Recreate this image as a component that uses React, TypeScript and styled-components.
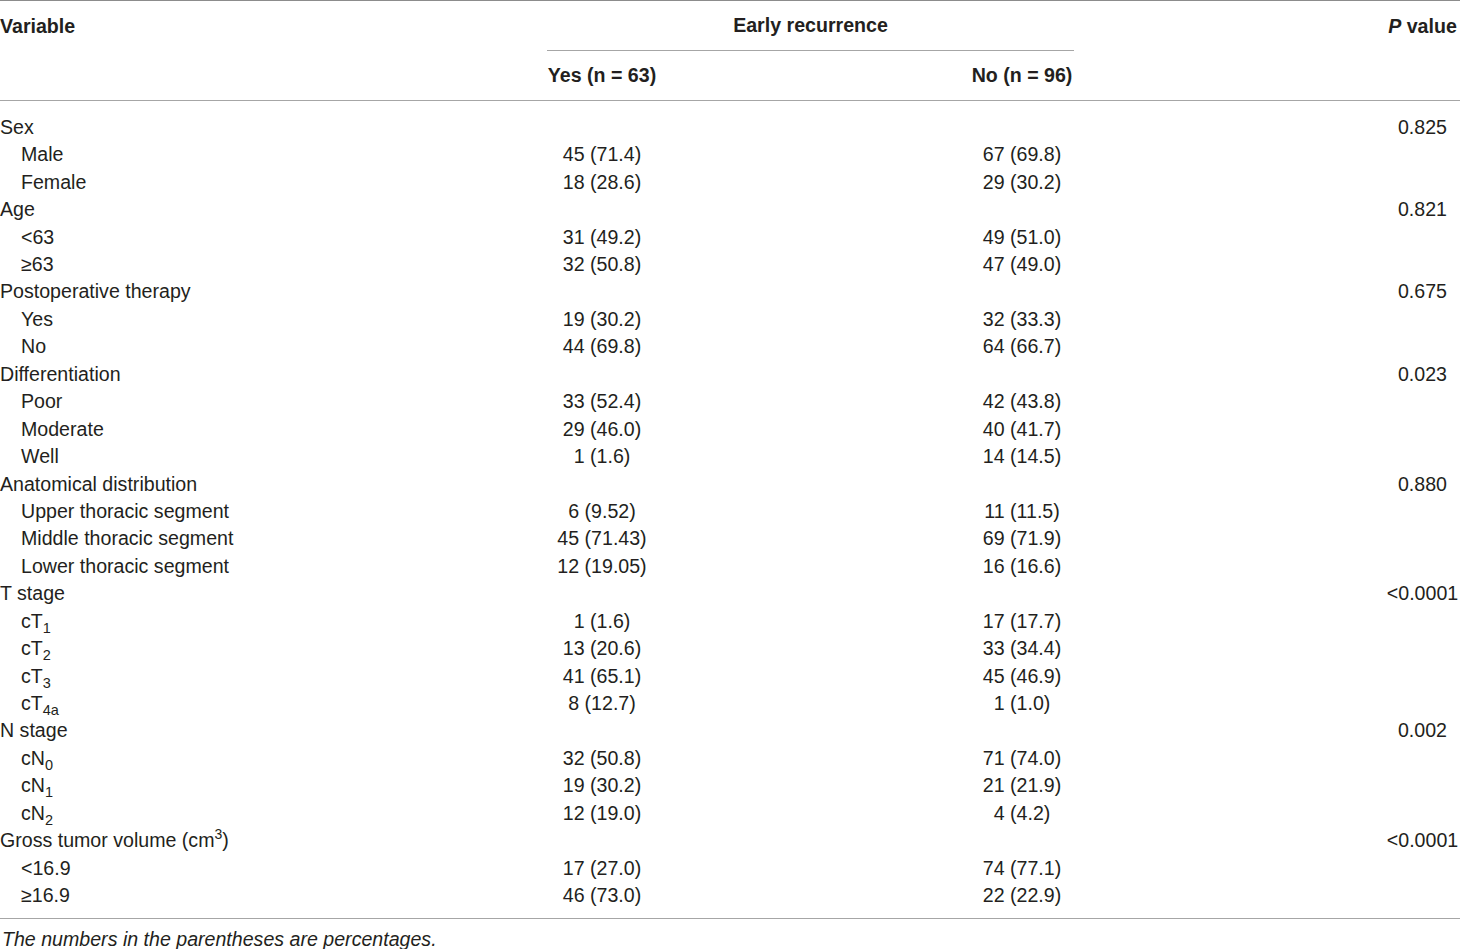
import React from "react";
import styled, { createGlobalStyle } from "styled-components";

const GlobalStyle = createGlobalStyle`
  html, body { margin: 0; padding: 0; background: #ffffff; }
  body { font-family: "Liberation Sans", Arial, Helvetica, sans-serif; color: #231f20; }
`;

const COLS = "537px 130px 294px 122px 302px 75px";

const Page = styled.div`
  width: 1460px;
  font-size: 19.6px;
`;

const Header = styled.div`
  display: grid;
  grid-template-columns: ${COLS};
  grid-template-rows: 50px 49px;
  border-top: 1px solid #8c8c8c;
  border-bottom: 1px solid #a6a6a6;
  font-weight: 700;
`;

const HeadCell = styled.div<{ $col: string; $row: number; $align?: string }>`
  grid-column: ${(p) => p.$col};
  grid-row: ${(p) => p.$row};
  display: flex;
  align-items: center;
  justify-content: ${(p) => p.$align || "center"};
  white-space: nowrap;
`;

const SpanHead = styled(HeadCell)`
  margin: 0 9px 0 10px;
  border-bottom: 1px solid #a6a6a6;
`;

const Italic = styled.i`
  font-style: italic;
`;

const Body = styled.div`
  padding: 12.6px 0 9px;
  border-bottom: 1px solid #a6a6a6;
`;

const Row = styled.div`
  display: grid;
  grid-template-columns: ${COLS};
  height: 27.44px;
  align-items: center;
  white-space: nowrap;
`;

const Label = styled.div<{ $indent?: boolean }>`
  grid-column: 1;
  padding-left: ${(p) => (p.$indent ? "21px" : "0")};
`;

const Value = styled.div<{ $col: number }>`
  grid-column: ${(p) => p.$col};
  text-align: center;
`;

const Sub = styled.sub`
  font-size: 14.5px;
  vertical-align: -5px;
  line-height: 0;
`;

const Sup = styled.sup`
  font-size: 14px;
  vertical-align: 8px;
  line-height: 0;
`;

const Note = styled.div`
  font-style: italic;
  padding: 9px 0 0 2px;
  line-height: 22px;
`;

type R = { label: React.ReactNode; indent?: boolean; yes?: string; no?: string; p?: string };

const rows: R[] = [
  { label: "Sex", p: "0.825" },
  { label: "Male", indent: true, yes: "45 (71.4)", no: "67 (69.8)" },
  { label: "Female", indent: true, yes: "18 (28.6)", no: "29 (30.2)" },
  { label: "Age", p: "0.821" },
  { label: "<63", indent: true, yes: "31 (49.2)", no: "49 (51.0)" },
  { label: "≥63", indent: true, yes: "32 (50.8)", no: "47 (49.0)" },
  { label: "Postoperative therapy", p: "0.675" },
  { label: "Yes", indent: true, yes: "19 (30.2)", no: "32 (33.3)" },
  { label: "No", indent: true, yes: "44 (69.8)", no: "64 (66.7)" },
  { label: "Differentiation", p: "0.023" },
  { label: "Poor", indent: true, yes: "33 (52.4)", no: "42 (43.8)" },
  { label: "Moderate", indent: true, yes: "29 (46.0)", no: "40 (41.7)" },
  { label: "Well", indent: true, yes: "1 (1.6)", no: "14 (14.5)" },
  { label: "Anatomical distribution", p: "0.880" },
  { label: "Upper thoracic segment", indent: true, yes: "6 (9.52)", no: "11 (11.5)" },
  { label: "Middle thoracic segment", indent: true, yes: "45 (71.43)", no: "69 (71.9)" },
  { label: "Lower thoracic segment", indent: true, yes: "12 (19.05)", no: "16 (16.6)" },
  { label: "T stage", p: "<0.0001" },
  { label: <>cT<Sub>1</Sub></>, indent: true, yes: "1 (1.6)", no: "17 (17.7)" },
  { label: <>cT<Sub>2</Sub></>, indent: true, yes: "13 (20.6)", no: "33 (34.4)" },
  { label: <>cT<Sub>3</Sub></>, indent: true, yes: "41 (65.1)", no: "45 (46.9)" },
  { label: <>cT<Sub>4a</Sub></>, indent: true, yes: "8 (12.7)", no: "1 (1.0)" },
  { label: "N stage", p: "0.002" },
  { label: <>cN<Sub>0</Sub></>, indent: true, yes: "32 (50.8)", no: "71 (74.0)" },
  { label: <>cN<Sub>1</Sub></>, indent: true, yes: "19 (30.2)", no: "21 (21.9)" },
  { label: <>cN<Sub>2</Sub></>, indent: true, yes: "12 (19.0)", no: "4 (4.2)" },
  { label: <>Gross tumor volume (cm<Sup>3</Sup>)</>, p: "<0.0001" },
  { label: "<16.9", indent: true, yes: "17 (27.0)", no: "74 (77.1)" },
  { label: "≥16.9", indent: true, yes: "46 (73.0)", no: "22 (22.9)" },
];

export default function App() {
  return (
    <Page>
      <GlobalStyle />
      <Header>
        <HeadCell $col="1" $row={1} $align="flex-start">Variable</HeadCell>
        <SpanHead $col="2 / 5" $row={1}>Early recurrence</SpanHead>
        <HeadCell $col="6" $row={1}><Italic>P</Italic>&nbsp;value</HeadCell>
        <HeadCell $col="2" $row={2}>Yes (n = 63)</HeadCell>
        <HeadCell $col="4" $row={2}>No (n = 96)</HeadCell>
      </Header>
      <Body>
        {rows.map((r, i) => (
          <Row key={i}>
            <Label $indent={r.indent}>{r.label}</Label>
            {r.yes && <Value $col={2}>{r.yes}</Value>}
            {r.no && <Value $col={4}>{r.no}</Value>}
            {r.p && <Value $col={6}>{r.p}</Value>}
          </Row>
        ))}
      </Body>
      <Note>The numbers in the parentheses are percentages.</Note>
    </Page>
  );
}
